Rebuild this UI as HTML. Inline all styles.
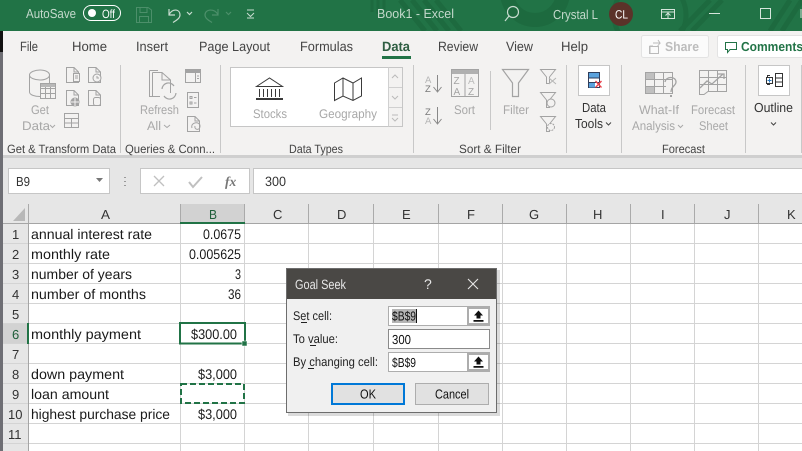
<!DOCTYPE html>
<html><head><meta charset="utf-8"><style>
html,body{margin:0;padding:0;background:#fff;overflow:hidden}
svg{display:block}
text{font-family:"Liberation Sans",sans-serif;font-size:13px;fill:#222}
.t{font-size:13.500px;fill:#444}
.g{font-size:12px;fill:#444}
.d{font-size:12.500px;fill:#a8a8a8}
.c{font-size:14px;fill:#1a1a1a}
.h{font-size:13px;fill:#333}
.l{font-size:12.500px;fill:#222}
.i{fill:none;stroke:#a3a3a3;stroke-width:1}
.k{fill:none;stroke:#444;stroke-width:1}
</style></head><body>
<svg xmlns="http://www.w3.org/2000/svg" width="802" height="451" viewBox="0 0 802 451" text-rendering="geometricPrecision">
<defs>
<g id="doc"><path class="i" d="M.5 .5H8L12.500 5V15.500H.5Z M8 .5V5H12.500"/></g>
<g id="up"><rect x="0" y="0" width="19" height="14" fill="#fff"/><path d="M9.500 1.500 14 6.500H11.500V9.500H7.500V6.500H5Z M4.500 11H14.500V12.800H4.500Z" fill="#111"/></g>
</defs>

<!-- backgrounds -->
<rect width="802" height="451" fill="#fff"/>
<rect width="802" height="31" fill="#217346"/>
<g fill="none" stroke="#1d6a3f">
<circle cx="535" cy="-8" r="28" stroke-width="14"/>
<circle cx="650" cy="15" r="36" stroke-width="5"/>
<path d="M400 0 425 31M412 0 437 31M424 0 449 31M436 0 461 31" stroke-width="5"/>
<path d="M680 31 710 0M692 31 722 0M770 31 790 0M782 31 802 0" stroke-width="5"/>
<path d="M372 0V12M378 0V14M384 0V10" stroke-width="3"/>
</g>
<rect x="0" y="31" width="802" height="125" fill="#f3f2f1"/>
<rect x="0" y="155" width="802" height="3" fill="#cfcfcf"/>
<rect x="0" y="158" width="802" height="46" fill="#e6e6e6"/>
<rect x="0" y="31" width="3" height="21" fill="#111"/>
<rect x="0" y="52" width="3" height="399" fill="#6e6e74"/>

<!-- title bar -->
<text x="26" y="18" textLength="50" lengthAdjust="spacingAndGlyphs" style="fill:#c4d9cc">AutoSave</text>
<rect x="83.500" y="5.500" width="37" height="15" rx="7.500" fill="#217346" stroke="#fff"/>
<circle cx="92" cy="13" r="4" fill="#fff"/>
<text x="102" y="18" textLength="13" lengthAdjust="spacingAndGlyphs" style="font-size:12px;fill:#fff">Off</text>
<g fill="none" stroke="#4c8f6a"><path d="M136.500 7.500H148L151.500 10V22.500H136.500Z M140 7.500V12.500H147V7.500 M139.500 22.500V16.500H148.500V22.500"/></g>
<g fill="none" stroke="#c8dcd0" stroke-width="1.200"><path d="M169 9V15H175 M169 14.500C173 8 180 9 180 15C180 18 177 20 173 22.500"/><path d="M187 12 189.500 14.500 192 12"/></g>
<g fill="none" stroke="#4c8f6a" stroke-width="1.200"><path d="M218 9V15H212 M218 14.500C214 8 205 9 205 15C205 18 208 20 212 22.500"/><path d="M226 12 228.500 14.500 231 12"/></g>
<path d="M247 10H254M247 13 250.500 16.500 254 13M247 18H254" fill="none" stroke="#c8dcd0"/>
<text x="377" y="18" textLength="77" lengthAdjust="spacingAndGlyphs" style="fill:#c4d9cc">Book1  -  Excel</text>
<circle cx="513" cy="12" r="5.500" fill="none" stroke="#c8dcd0" stroke-width="1.200"/><path d="M509 16 505 21" stroke="#c8dcd0" stroke-width="1.200"/>
<text x="553" y="19" textLength="45" lengthAdjust="spacingAndGlyphs" style="fill:#c4d9cc">Crystal L</text>
<circle cx="621" cy="14" r="12" fill="#5b3229"/>
<text x="615" y="18.500" textLength="13" lengthAdjust="spacingAndGlyphs" style="font-size:12px;fill:#fff">CL</text>
<path d="M661.500 9.500H674.500V18.500H661.500ZM661.500 12H674.500M668 18V13.500M665.500 15.500 668 13 670.500 15.500" fill="none" stroke="#d5e5db"/>
<rect x="709" y="13" width="11" height="1" fill="#d5e5db"/>
<rect x="760.500" y="8.500" width="10" height="10" fill="none" stroke="#d5e5db"/>
<path d="M801 9V18" stroke="#d5e5db"/>

<!-- tabs -->
<text class="t" x="20" y="51" textLength="18" lengthAdjust="spacingAndGlyphs">File</text>
<text class="t" x="72" y="51" textLength="35" lengthAdjust="spacingAndGlyphs">Home</text>
<text class="t" x="136" y="51" textLength="32" lengthAdjust="spacingAndGlyphs">Insert</text>
<text class="t" x="199" y="51" textLength="71" lengthAdjust="spacingAndGlyphs">Page Layout</text>
<text class="t" x="300" y="51" textLength="53" lengthAdjust="spacingAndGlyphs">Formulas</text>
<text class="t" x="382" y="51" textLength="28" lengthAdjust="spacingAndGlyphs" style="font-weight:bold;fill:#2f5f43">Data</text>
<rect x="382" y="56" width="29" height="3" fill="#217346"/>
<text class="t" x="438" y="51" textLength="40" lengthAdjust="spacingAndGlyphs">Review</text>
<text class="t" x="506" y="51" textLength="27" lengthAdjust="spacingAndGlyphs">View</text>
<text class="t" x="561" y="51" textLength="27" lengthAdjust="spacingAndGlyphs">Help</text>
<rect x="641.500" y="35.500" width="67" height="22" rx="2" fill="#fbfbfb" stroke="#e3e3e3"/>
<path d="M650 53V46H653M653 43 660 43 658 40M660 43 657 47" fill="none" stroke="#bbb"/><rect x="649.500" y="46.500" width="9" height="7" fill="none" stroke="#bbb"/>
<text x="665" y="51" textLength="34" lengthAdjust="spacingAndGlyphs" style="fill:#bdbdbd;font-weight:bold;font-size:13px">Share</text>
<rect x="717.500" y="35.500" width="90" height="22" rx="2" fill="#fff" stroke="#e3e3e3"/>
<path d="M725.500 42.500H736.500V49.500H730L727.500 52.500V49.500H725.500Z" fill="none" stroke="#217346"/>
<text x="741" y="51" textLength="62" lengthAdjust="spacingAndGlyphs" style="fill:#217346;font-weight:bold;font-size:13px">Comments</text>

<!-- separators -->
<g fill="#c8c8c8">
<rect x="120" y="65" width="1" height="88"/><rect x="220" y="65" width="1" height="88"/><rect x="413" y="65" width="1" height="88"/><rect x="566" y="65" width="1" height="88"/><rect x="621" y="65" width="1" height="88"/><rect x="745" y="65" width="1" height="88"/><rect x="801" y="65" width="1" height="88"/>
<rect x="490" y="71" width="1" height="59"/>
</g>

<!-- group labels -->
<text class="g" x="7" y="153" textLength="109" lengthAdjust="spacingAndGlyphs">Get &amp; Transform Data</text>
<text class="g" x="125" y="153" textLength="90" lengthAdjust="spacingAndGlyphs">Queries &amp; Conn...</text>
<text class="g" x="289" y="153" textLength="54" lengthAdjust="spacingAndGlyphs">Data Types</text>
<text class="g" x="459" y="153" textLength="62" lengthAdjust="spacingAndGlyphs">Sort &amp; Filter</text>
<text class="g" x="662" y="153" textLength="43" lengthAdjust="spacingAndGlyphs">Forecast</text>

<!-- get data icons -->
<path class="i" d="M29.500 75V92C29.500 95 35 96.500 40 96.500M29.500 75C29.500 72 35 70 40 70S49.500 72 49.500 75V84M29.500 75C29.500 78 35 80 40 80S49.500 78 49.500 75" stroke-width="1.200"/>
<rect x="40.500" y="83.500" width="15" height="15" fill="#f3f2f1" stroke="#a3a3a3"/>
<path class="i" d="M40.500 88.500H55.500M40.500 93.500H55.500M45.500 84V98M50.500 84V98"/><rect x="41" y="84" width="14" height="3" fill="#b8b8b8"/>
<use href="#doc" x="66" y="67"/><rect x="73.500" y="73.500" width="6" height="8" fill="#f3f2f1" stroke="#a3a3a3"/><path class="i" d="M75 76H78M75 78H78"/>
<use href="#doc" x="88" y="67"/><circle cx="97" cy="78" r="4" fill="#f3f2f1" stroke="#a3a3a3"/><path class="i" d="M97 76V78H99"/>
<use href="#doc" x="66" y="90"/><circle cx="75" cy="102" r="4.500" fill="#a3a3a3"/><path d="M71 102H79M75 98V106" stroke="#f3f2f1"/>
<use href="#doc" x="88" y="90"/><rect x="93.500" y="97.500" width="7" height="8" rx="2" fill="#f3f2f1" stroke="#a3a3a3"/>
<rect x="64.500" y="113.500" width="14" height="14" fill="#f3f2f1" stroke="#a3a3a3"/><path class="i" d="M64.500 118.500H78.500M64.500 123H78.500M71.500 118.500V127"/>
<text class="d" x="31" y="114" textLength="18" lengthAdjust="spacingAndGlyphs">Get</text>
<text class="d" x="22" y="130" textLength="28" lengthAdjust="spacingAndGlyphs">Data</text>
<path d="M50 125 52.500 127.500 55 125" fill="none" stroke="#a8a8a8"/>

<!-- queries icons -->
<path class="i" d="M149.500 70.500H158M149.500 70.500V96.500H152" stroke-width="1.200"/>
<path class="i" d="M152.500 72.500H162L170.500 80V93M152.500 72.500V96.500H160M162 72.500V80H170.500" stroke-width="1.200"/>
<path d="M162 89A6.500 6.500 0 0 1 174 86M176 93A6.500 6.500 0 0 1 164 96" fill="none" stroke="#a3a3a3" stroke-width="1.200"/>
<text class="d" x="140" y="114" textLength="39" lengthAdjust="spacingAndGlyphs">Refresh</text>
<text class="d" x="147" y="130" textLength="14" lengthAdjust="spacingAndGlyphs">All</text>
<path d="M164 125 167 127.500 170 125" fill="none" stroke="#a8a8a8"/>
<rect x="185.500" y="69.500" width="15" height="13" fill="#f3f2f1" stroke="#a3a3a3" stroke-width="1"/><rect x="186" y="70" width="14" height="3" fill="#a3a3a3"/><path class="i" d="M195.500 73V82M197 76H199M197 78.500H199"/>
<rect x="187.500" y="92.500" width="11" height="15" fill="#f3f2f1" stroke="#a3a3a3"/><path class="i" d="M190 96.500H192V98.500H190ZM194 97.500H196.500M190 102H192V104H190ZM194 103H196.500"/>
<use href="#doc" x="187" y="116"/><path d="M192 128C190 122 200 121 200 126S194 130 195 126" fill="none" stroke="#a3a3a3"/>

<!-- data types gallery -->
<rect x="230.500" y="67.500" width="172" height="59" fill="#fff" stroke="#c6c6c6"/>
<rect x="389" y="68" width="13" height="58" fill="#f3f2f1"/>
<path d="M388.500 67.500V126.500M389 87.500H402M389 107.500H402" stroke="#d0d0d0"/>
<path d="M392 78 395 75 398 78M392 96 395 99 398 96M392 115H398M392 118 395 121 398 118" fill="none" stroke="#bbb"/>
<path class="k" d="M256.500 86.500 269.500 78 282.500 86.500Z M258 86.500H281M259.500 89V97M263.500 89V97M267.500 89V97M271.500 89V97M275.500 89V97M279.500 89V97" style="stroke:#3a3a3a"/>
<rect x="256" y="98" width="27" height="2" fill="#3a3a3a"/>
<path class="k" d="M334.500 83 343 78 353 83 361.500 78V96L353 100.500 343 96 334.500 100.500ZM343 78V96M353 83V100" style="stroke:#3a3a3a"/>
<text class="d" x="253" y="118" textLength="34" lengthAdjust="spacingAndGlyphs">Stocks</text>
<text class="d" x="319" y="118" textLength="58" lengthAdjust="spacingAndGlyphs">Geography</text>

<!-- sort -->
<text x="425" y="83" style="font-size:9.500px;fill:#b5b5b5">A</text><text x="425" y="92" style="font-size:9.500px;fill:#777">Z</text>
<text x="425" y="115" style="font-size:9.500px;fill:#777">Z</text><text x="425" y="124" style="font-size:9.500px;fill:#b5b5b5">A</text>
<path class="i" d="M437.500 75V91M433.500 87 437.500 92 441.500 87M437.500 107V123M433.500 119 437.500 124 441.500 119" style="stroke:#888"/>
<rect x="451.500" y="69.500" width="27" height="27" fill="#f3f2f1" stroke="#a3a3a3"/><rect x="452" y="70" width="26" height="4" fill="#b0b0b0"/><path class="i" d="M465 74V96"/>
<text x="453.500" y="84" style="font-size:10px;fill:#a3a3a3">Z</text><text x="453.500" y="95" style="font-size:10px;fill:#a3a3a3">A</text>
<text x="468" y="84" style="font-size:10px;fill:#bbb">A</text><text x="468" y="95" style="font-size:10px;fill:#a3a3a3">Z</text>
<text class="d" x="454" y="114" textLength="21" lengthAdjust="spacingAndGlyphs">Sort</text>
<!-- filter -->
<path d="M502.500 69.500H528.500L518.500 83V96.500H512.500V83Z" fill="#f3f2f1" stroke="#a3a3a3" stroke-width="1.200"/>
<text class="d" x="503" y="114" textLength="26" lengthAdjust="spacingAndGlyphs">Filter</text>
<path class="i" d="M540.500 69.500H555.500L549.500 77V83.500H546.500V77Z"/><path class="i" d="M549 78 556 84M556 78 549 84" style="stroke:#b5b5b5"/>
<path class="i" d="M540.500 92.500H555.500L549.500 100V107.500H546.500V100Z"/><circle cx="551" cy="103" r="4" fill="#f3f2f1" stroke="#a3a3a3"/>
<path class="i" d="M540.500 116.500H555.500L549.500 124V131.500H546.500V124Z"/><circle cx="551" cy="127" r="3.500" fill="#f3f2f1" stroke="#a3a3a3" stroke-dasharray="2 1"/>

<!-- data tools -->
<rect x="578.500" y="65.500" width="31" height="30" fill="#fff" stroke="#c6c6c6"/>
<rect x="588.500" y="72.500" width="11" height="15" fill="#fff" stroke="#2f3e5c"/><rect x="589" y="73" width="10" height="4.500" fill="#5aa2dd"/><rect x="589" y="83" width="6" height="4.500" fill="#5aa2dd"/><path d="M589 78H599M589 82.500H599" stroke="#2f3e5c"/>
<path d="M595.500 81 601.500 87.500M601.500 81 595.500 87.500" stroke="#e8404a" stroke-width="1.300"/>
<text class="h" x="582" y="112" textLength="24" lengthAdjust="spacingAndGlyphs">Data</text>
<text class="h" x="575" y="128" textLength="28" lengthAdjust="spacingAndGlyphs">Tools</text>
<path d="M606 122.500 608.500 125 611 122.500" fill="none" stroke="#444"/>

<!-- forecast -->
<rect x="645.500" y="72.500" width="27" height="21" fill="#f3f2f1" stroke="#a3a3a3"/><rect x="646" y="73" width="9" height="6.500" fill="#c0c0c0"/><rect x="646" y="86" width="9" height="7" fill="#c0c0c0"/><path class="i" d="M645.500 79.500H672.500M645.500 86.500H666M654.500 73V93M663.500 73V93"/>
<path d="M665 82C666 76 676 76 676 82C676 86 671 86 671 92" fill="none" stroke="#a3a3a3" stroke-width="1.300"/><rect x="670" y="95" width="2" height="2" fill="#a3a3a3"/>
<text class="d" x="639" y="114" textLength="40" lengthAdjust="spacingAndGlyphs">What-If</text>
<text class="d" x="632" y="130" textLength="43" lengthAdjust="spacingAndGlyphs">Analysis</text>
<path d="M678 125 680.500 127.500 683 125" fill="none" stroke="#a8a8a8"/>
<path class="i" d="M699.500 70.500H726.500V91.500H708L704 94.500H699.500ZM699.500 77.500H726.500M699.500 84.500H726.500M708.500 70.500V91M717.500 70.500V91"/>
<path d="M700 88 707 81 712 84 723 74M718 74H724V79" fill="none" stroke="#a3a3a3" stroke-width="1.300"/>
<text class="d" x="691" y="114" textLength="44" lengthAdjust="spacingAndGlyphs">Forecast</text>
<text class="d" x="699" y="130" textLength="29" lengthAdjust="spacingAndGlyphs">Sheet</text>

<!-- outline -->
<rect x="758.500" y="65.500" width="31" height="30" fill="#fff" stroke="#c6c6c6"/>
<path d="M770 75.500H767.500V84.500H770M775.500 73.500H782.500V86.500H775.500ZM775.500 78H782.500M775.500 82H782.500" fill="none" stroke="#333"/>
<rect x="766.500" y="77.500" width="6" height="6" fill="#fff" stroke="#333"/><path d="M769.500 78.500V82.500M767.500 80.500H771.500" stroke="#2a7bc4"/>
<text class="h" x="754" y="112" textLength="39" lengthAdjust="spacingAndGlyphs">Outline</text>
<path d="M771 122.500 773.500 125 776 122.500" fill="none" stroke="#444"/>

<!-- formula bar -->
<rect x="8.500" y="168.500" width="101" height="25" fill="#fff" stroke="#c6c6c6"/>
<text x="16" y="186" textLength="14" lengthAdjust="spacingAndGlyphs" style="font-size:13px;fill:#333">B9</text>
<path d="M96 178H103L99.500 182Z" fill="#777"/>
<path d="M125 177V178M125 181V182M125 185V186" stroke="#999" stroke-width="2"/>
<rect x="140.500" y="168.500" width="109" height="25" fill="#fff" stroke="#c6c6c6"/>
<path d="M154 176 164 186M164 176 154 186" stroke="#c0c0c0" stroke-width="1.300"/>
<path d="M189 182 193 187 202 177" fill="none" stroke="#c0c0c0" stroke-width="2"/>
<text x="225" y="186" style="font-family:'Liberation Serif',serif;font-style:italic;font-size:13.500px;font-weight:bold;fill:#777">fx</text>
<rect x="253.500" y="168.500" width="560" height="25" fill="#fff" stroke="#c6c6c6"/>
<text x="265" y="186" textLength="21" lengthAdjust="spacingAndGlyphs" style="font-size:13.500px;fill:#333">300</text>

<!-- grid headers -->
<rect x="3" y="204" width="799" height="20" fill="#e6e6e6"/>
<rect x="3" y="224" width="25" height="227" fill="#e6e6e6"/>
<rect x="180" y="204" width="65" height="20" fill="#d2d2d2"/>
<rect x="3" y="323" width="25" height="20" fill="#d2d2d2"/>
<path d="M25 208V221H13Z" fill="#b8b8b8"/>
<!-- grid lines -->
<g stroke="#d4d4d4">
<path d="M28.500 224V451M180.500 224V451M244.500 224V451M308.500 224V451M373.500 224V451M438.500 224V451M502.500 224V451M566.500 224V451M630.500 224V451M694.500 224V451M758.500 224V451"/>
<path d="M3 243.500H802M3 263.500H802M3 283.500H802M3 303.500H802M3 323.500H802M3 343.500H802M3 363.500H802M3 383.500H802M3 403.500H802M3 423.500H802M3 443.500H802"/>
</g>
<g stroke="#aaa">
<path d="M28.500 204V224M180.500 204V224M244.500 204V224M308.500 204V224M373.500 204V224M438.500 204V224M502.500 204V224M566.500 204V224M630.500 204V224M694.500 204V224M758.500 204V224"/>
</g>
<rect x="3" y="223" width="799" height="1" fill="#a5a5a5"/>
<rect x="28" y="224" width="1" height="227" fill="#a5a5a5"/>
<rect x="180" y="222" width="65" height="2" fill="#217346"/>
<rect x="27" y="323" width="2" height="21" fill="#217346"/>

<!-- header labels -->
<text x="101" y="219" textLength="9" lengthAdjust="spacingAndGlyphs" style="fill:#333">A</text>
<text x="209" y="219" textLength="8" lengthAdjust="spacingAndGlyphs" style="fill:#1f5e3a">B</text>
<g>
<text x="273" y="219" style="fill:#333">C</text><text x="337" y="219" style="fill:#333">D</text><text x="402" y="219" style="fill:#333">E</text><text x="467" y="219" style="fill:#333">F</text><text x="529" y="219" style="fill:#333">G</text><text x="593" y="219" style="fill:#333">H</text><text x="661" y="219" style="fill:#333">I</text><text x="724" y="219" style="fill:#333">J</text><text x="787" y="219" style="fill:#333">K</text>
</g>
<text x="12" y="239" class="h">1</text><text x="12" y="259" class="h">2</text><text x="12" y="279" class="h">3</text><text x="12" y="299" class="h">4</text><text x="12" y="319" class="h">5</text>
<text x="12" y="339" class="h" style="fill:#1f5e3a">6</text><text x="12" y="359" class="h">7</text><text x="12" y="379" class="h">8</text><text x="12" y="399" class="h">9</text>
<text x="8" y="419" class="h">10</text><text x="8" y="439" class="h">11</text>

<!-- cells -->
<text class="c" x="31" y="239" textLength="121" lengthAdjust="spacingAndGlyphs">annual interest rate</text>
<text class="c" x="31" y="259" textLength="79" lengthAdjust="spacingAndGlyphs">monthly rate</text>
<text class="c" x="31" y="279" textLength="101" lengthAdjust="spacingAndGlyphs">number of years</text>
<text class="c" x="31" y="299" textLength="115" lengthAdjust="spacingAndGlyphs">number of months</text>
<text class="c" x="31" y="339" textLength="110" lengthAdjust="spacingAndGlyphs">monthly payment</text>
<text class="c" x="31" y="379" textLength="93" lengthAdjust="spacingAndGlyphs">down payment</text>
<text class="c" x="31" y="399" textLength="78" lengthAdjust="spacingAndGlyphs">loan amount</text>
<text class="c" x="31" y="419" textLength="139" lengthAdjust="spacingAndGlyphs">highest purchase price</text>
<text class="c" x="203" y="239" textLength="38" lengthAdjust="spacingAndGlyphs">0.0675</text>
<text class="c" x="189" y="259" textLength="52" lengthAdjust="spacingAndGlyphs">0.005625</text>
<text class="c" x="235" y="279" textLength="6" lengthAdjust="spacingAndGlyphs">3</text>
<text class="c" x="228" y="299" textLength="13" lengthAdjust="spacingAndGlyphs">36</text>
<text class="c" x="191" y="339" textLength="46" lengthAdjust="spacingAndGlyphs">$300.00</text>
<text class="c" x="198" y="379" textLength="39" lengthAdjust="spacingAndGlyphs">$3,000</text>
<text class="c" x="198" y="419" textLength="39" lengthAdjust="spacingAndGlyphs">$3,000</text>

<!-- selection -->
<rect x="180" y="323" width="65" height="20.500" fill="none" stroke="#217346" stroke-width="2"/>
<rect x="242" y="341" width="5" height="5" fill="#217346" stroke="#fff" stroke-width=".5"/>
<rect x="181" y="384" width="63" height="19" fill="none" stroke="#217346" stroke-width="2" stroke-dasharray="6 3"/>

<!-- dialog -->
<rect x="288" y="270" width="212" height="146" fill="#000" opacity=".14"/>
<rect x="286.500" y="268.500" width="210" height="144" fill="#f0f0f0" stroke="#6d6d6d"/>
<rect x="287" y="269" width="209" height="30" fill="#4a4845"/>
<text x="295" y="289" textLength="51" lengthAdjust="spacingAndGlyphs" style="font-size:13.500px;fill:#e6e6e6">Goal Seek</text>
<text x="424" y="289" style="font-size:14px;fill:#e6e6e6">?</text>
<path d="M468 279 478 289M478 279 468 289" stroke="#e6e6e6" stroke-width="1.100"/>

<text class="l" x="293" y="320" textLength="39" lengthAdjust="spacingAndGlyphs">Set cell:</text><rect x="301" y="322" width="6" height="1" fill="#222"/>
<text class="l" x="293" y="343" textLength="45" lengthAdjust="spacingAndGlyphs">To value:</text><rect x="310" y="345" width="6" height="1" fill="#222"/>
<text class="l" x="293" y="366" textLength="85" lengthAdjust="spacingAndGlyphs">By changing cell:</text><rect x="308" y="368" width="6" height="1" fill="#222"/>

<!-- set cell field -->
<rect x="388" y="306" width="102" height="20" fill="#adadad"/>
<rect x="389" y="307" width="78" height="18" fill="#fff"/>
<use href="#up" x="469" y="309"/>
<rect x="392" y="309" width="24" height="14" fill="#b5b5b5"/>
<text x="392" y="320.500" textLength="24" lengthAdjust="spacingAndGlyphs" style="font-size:13px;fill:#111">$B$9</text>
<rect x="416" y="309" width="1" height="14" fill="#111"/>

<rect x="388.500" y="329.500" width="101" height="19" fill="#fff" stroke="#8a8a8a"/>
<text x="392" y="344" textLength="19" lengthAdjust="spacingAndGlyphs" style="font-size:13px;fill:#111">300</text>

<!-- by changing field -->
<rect x="388" y="352" width="102" height="20" fill="#adadad"/>
<rect x="389" y="353" width="78" height="18" fill="#fff"/>
<use href="#up" x="469" y="355"/>
<text x="392" y="367" textLength="24" lengthAdjust="spacingAndGlyphs" style="font-size:13px;fill:#111">$B$9</text>

<rect x="332" y="384" width="72" height="20" fill="#e1e1e1" stroke="#0078d7" stroke-width="2"/>
<text x="360" y="398.500" textLength="16" lengthAdjust="spacingAndGlyphs" style="font-size:13px;fill:#111">OK</text>
<rect x="415.500" y="383.500" width="73" height="21" fill="#e1e1e1" stroke="#adadad"/>
<text x="435" y="398.500" textLength="34" lengthAdjust="spacingAndGlyphs" style="font-size:13px;fill:#111">Cancel</text>
</svg>
</body></html>
